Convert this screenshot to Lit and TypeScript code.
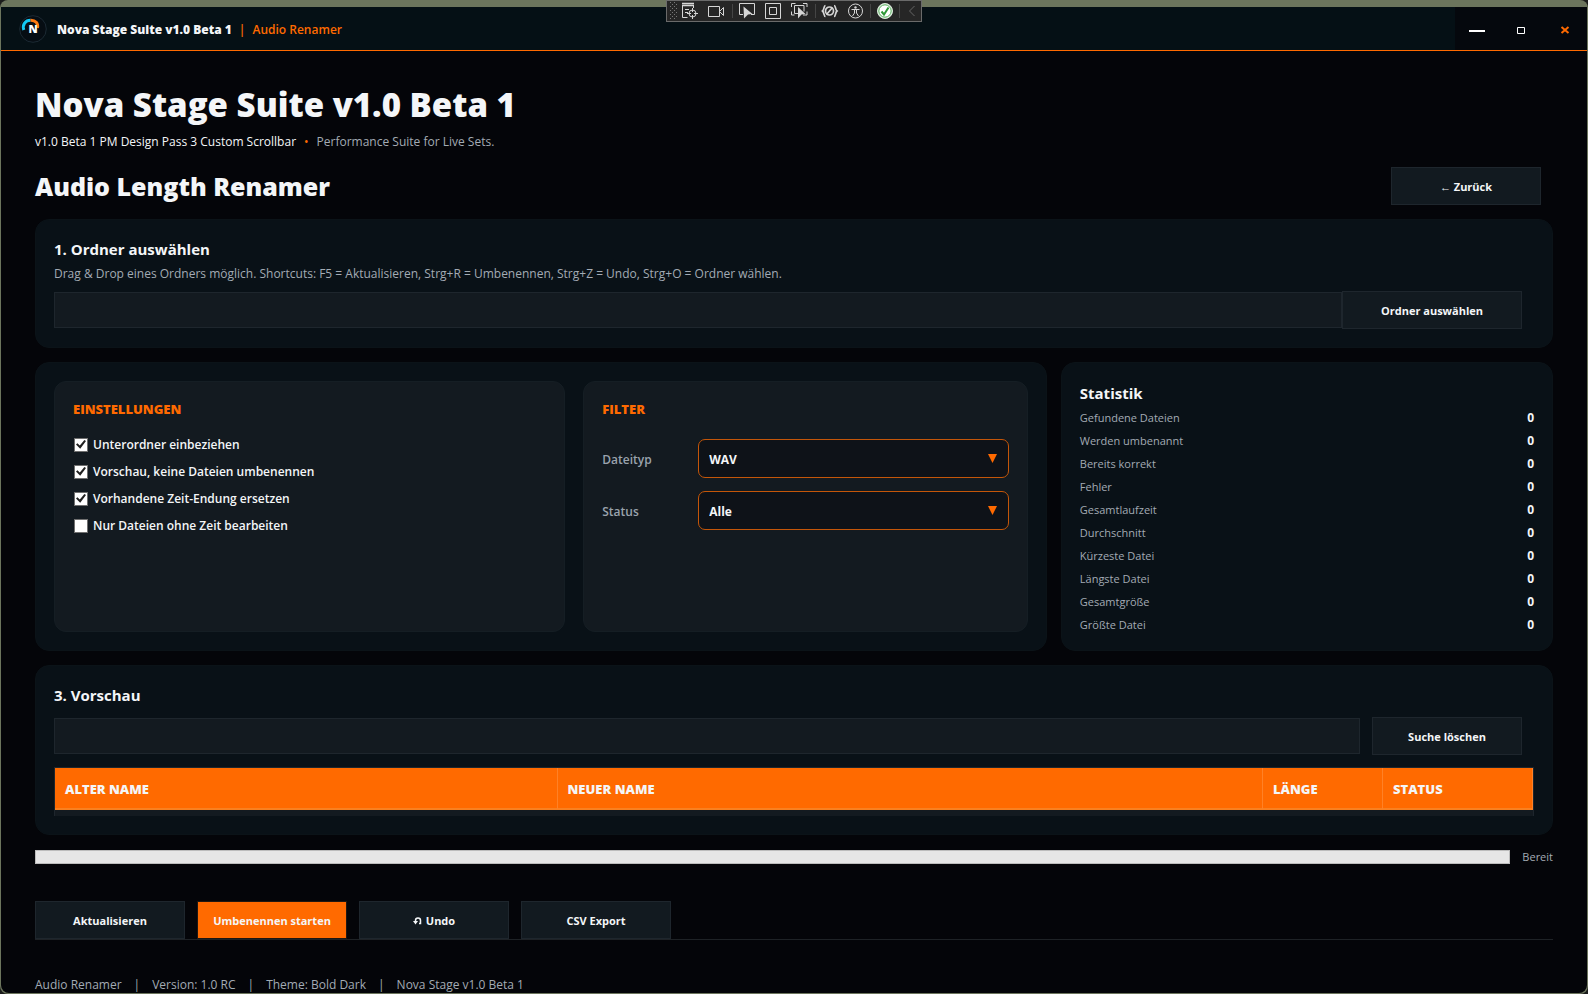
import { LitElement, html, css, svg } from "lit";
import { customElement, property, state } from "lit/decorators.js";

interface Stat {
  label: string;
  value: string;
}

const STATS: Stat[] = [
  "Gefundene Dateien",
  "Werden umbenannt",
  "Bereits korrekt",
  "Fehler",
  "Gesamtlaufzeit",
  "Durchschnitt",
  "Kürzeste Datei",
  "Längste Datei",
  "Gesamtgröße",
  "Größte Datei",
].map((label) => ({ label, value: "0" }));

const OPTIONS = [
  { id: "sub", label: "Unterordner einbeziehen", on: true },
  { id: "preview", label: "Vorschau, keine Dateien umbenennen", on: true },
  { id: "replace", label: "Vorhandene Zeit-Endung ersetzen", on: true },
  { id: "missing", label: "Nur Dateien ohne Zeit bearbeiten", on: false },
];

const FILTERS = [
  { id: "type", label: "Dateityp", values: ["WAV", "MP3", "FLAC"] },
  { id: "status", label: "Status", values: ["Alle", "OK", "Fehler"] },
];

/* Floating debug toolbar docked to the top edge of the window. */
@customElement("debug-toolbar")
export class DebugToolbar extends LitElement {
  static styles = css`
    :host {
      display: block;
    }
    .bar {
      box-sizing: border-box;
      display: flex;
      align-items: center;
      height: 22px;
      width: 256px;
      border: 1px solid #6a6a6a;
      background: #262626;
    }
    .art {
      display: block;
    }
  `;

  render() {
    const dots = [];
    for (let y = 1; y < 20; y += 4) {
      for (let x = 3; x < 9; x += 4) {
        dots.push(svg`<rect x=${x} y=${y} width="1" height="1"/>`);
        if (y < 17) dots.push(svg`<rect x=${x + 2} y=${y + 2} width="1" height="1"/>`);
      }
    }
    return html`
      <div class="bar" role="toolbar" aria-label="Debug">
        <svg class="art" width="254" height="20" viewBox="0 0 254 20" fill="none" stroke="#d6d6d6">
          <g fill="#777" stroke="none">${dots}</g>
          <g>
            <path d="M15 2.500h12M15 4.500h12" stroke-width="1.500" />
            <path d="M15.500 5v11.500h5M18 8.500h4M18 11.500h3M26.500 5v2" />
            <circle cx="25.500" cy="12.500" r="3.500" />
            <path d="M25.500 7v4M25.500 14v4M20 12.500h4M27 12.500h4" />
          </g>
          <path d="M41.500 5.500h11v10h-11zM53 10l3.500-3.500v8L53 11" />
          <path d="M65.500 3v14M148.500 3v14M203.500 3v14M232.500 3v14" stroke="#454545" />
          <path d="M76 13.500h-3.500v-11h15v11H84" />
          <path d="M76.500 5.500l9 7.500-4.500.500-4 4z" fill="#d6d6d6" stroke="none" />
          <path d="M98.500 2.500h15v15h-15zM102.500 6.500h7v7h-7z" />
          <path d="M124.500 6v-3.500h4M136 2.500h4V6M124.500 10.500v3.500h3M140 10.500V14h-4" />
          <path d="M131 12.500h-3.500V4.500h9.500v6" />
          <path d="M131 6l7.500 7-4 .500-3.500 4z" fill="#d6d6d6" stroke="none" />
          <g stroke-width="1.700">
            <path d="M158.500 4.500c-2 0-1 4-3 5.500 2 1.500 1 5.500 3 5.500M167 4.500c2 0 1 4 3 5.500-2 1.500-1 5.500-3 5.500" />
            <circle cx="162.500" cy="10" r="4" />
            <path d="M159.500 13.500l6-7" />
          </g>
          <circle cx="188.500" cy="10" r="7" />
          <circle cx="188.500" cy="6.500" r="1.200" fill="#d6d6d6" stroke="none" />
          <path d="M184.500 8.500h8M187.500 9v3l-2 3M189.500 9v3l2 3" />
          <circle cx="218" cy="10" r="7.500" fill="#fff" stroke="#d9e8d9" />
          <circle cx="218" cy="10" r="6.200" stroke="#4aa850" />
          <path d="M214.500 10.500l2.500 3 4.500-7" stroke="#2f9a38" stroke-width="2" />
          <path d="M247.500 5l-5 5 5 5" stroke="#666" />
        </svg>
      </div>
    `;
  }
}

@customElement("app-root")
export class AppRoot extends LitElement {
  @property() appName = "Nova Stage Suite v1.0 Beta 1";
  @state() private folder = "";
  @state() private query = "";

  static styles = css`
    :host {
      display: block;
      background: #1b1c1b;
      color: #f4f6f8;
      font-family: "Segoe UI", "Open Sans", "Noto Sans", sans-serif;
      font-size: 12px;
    }
    * {
      box-sizing: border-box;
    }
    h1,
    h2,
    h3,
    p {
      margin: 0;
    }
    button,
    input,
    select {
      font: inherit;
      color: inherit;
      margin: 0;
      border-radius: 0;
    }
    .frame {
      display: flex;
      flex-direction: column;
      min-height: 100vh;
      padding: 7px 1px 1px;
      border-radius: 8px;
      background: #6c755d;
    }
    .window {
      flex: 1;
      display: flex;
      flex-direction: column;
      overflow: hidden;
      border-radius: 0 0 8px 8px;
      background: #040509;
    }
    .toolbar {
      position: absolute;
      top: 0;
      left: 50%;
      transform: translateX(-50%);
    }

    .titlebar {
      display: flex;
      align-items: stretch;
      height: 44px;
      border-bottom: 1px solid #ff6a00;
      background: #051015;
    }
    .brand {
      flex: 1;
      display: flex;
      align-items: center;
      gap: 10px;
      padding-left: 18px;
      line-height: 20px;
    }
    .brand b {
      font-weight: 800;
    }
    .crumb {
      display: flex;
      gap: 7px;
      padding-top: 2px;
    }
    .accent {
      color: #ff6a00;
    }
    .crumb .accent {
      font-weight: 600;
    }
    .controls {
      display: flex;
      background: #05080d;
    }
    .control {
      display: grid;
      place-items: center;
      width: 44px;
      padding: 0;
      border: 0;
      background: none;
    }
    .monogram {
      font-size: 11px;
      font-weight: 800;
    }

    .content {
      flex: 1;
      padding: 31px 34px 0;
    }
    .hero {
      font-size: 33px;
      line-height: 46px;
      font-weight: 800;
    }
    .tagline {
      display: flex;
      gap: 8px;
      margin-top: 5px;
      line-height: 18px;
    }
    .muted {
      color: #a3abb4;
    }
    .heading {
      display: flex;
      align-items: center;
      justify-content: space-between;
      margin: 16px 0 14px;
      padding-right: 12px;
    }
    .heading h2 {
      font-size: 25px;
      line-height: 34px;
      font-weight: 800;
    }
    .button {
      width: 150px;
      height: 38px;
      padding: 0;
      border: 1px solid #1e262d;
      background: #121a20;
      font-size: 11px;
      font-weight: 700;
    }
    .button.wide {
      width: 180px;
    }
    .button.primary {
      background: #ff6a00;
      border-color: #1e1712;
    }

    .card {
      padding: 18px;
      border: 1px solid #0b1318;
      border-radius: 14px;
      background: #091117;
    }
    .columns + .card,
    .columns {
      margin-top: 14px;
    }
    .title {
      font-size: 15px;
      line-height: 22px;
      font-weight: 700;
    }
    .hint {
      margin-top: 5px;
      line-height: 18px;
    }
    .field-row {
      display: flex;
      align-items: center;
      padding-right: 12px;
    }
    .folder {
      margin-top: 8px;
    }
    .search {
      margin: 11px 0 12px;
      gap: 12px;
    }
    .input {
      flex: 1;
      min-width: 0;
      height: 36px;
      padding: 0 10px;
      border: 1px solid #1e262d;
      background: #131a20;
      outline: none;
    }

    .columns {
      display: grid;
      grid-template-columns: 37fr 18fr;
      gap: 14px;
    }
    .panels {
      display: grid;
      grid-template-columns: 23fr 20fr;
      gap: 18px;
    }
    .panel {
      padding: 17px 18px;
      border: 1px solid #151e24;
      border-radius: 12px;
      background: #131a20;
    }
    .panel h3 {
      color: #ff6a00;
      font-size: 13px;
      line-height: 20px;
      font-weight: 800;
    }
    .checks {
      display: flex;
      flex-direction: column;
      margin-top: 12px;
    }
    .check {
      display: flex;
      align-items: center;
      gap: 5px;
      font-weight: 600;
      line-height: 27px;
    }
    .check input {
      appearance: none;
      display: grid;
      place-items: center;
      width: 14px;
      height: 14px;
      margin-left: 1px;
      border: 1px solid #707070;
      background: #fff;
    }
    .check input:checked::before {
      content: "";
      width: 10px;
      height: 9px;
      background: #212121;
      clip-path: polygon(0 50%, 14% 36%, 38% 62%, 84% 0, 100% 12%, 42% 96%);
    }
    .filters {
      display: grid;
      grid-template-columns: 96px 1fr;
      align-items: center;
      row-gap: 13px;
      margin-top: 20px;
    }
    .filters label {
      padding-top: 2px;
      color: #9aa3ad;
      font-weight: 600;
    }
    .picker {
      display: grid;
      align-items: center;
    }
    .picker > * {
      grid-area: 1 / 1;
    }
    .picker select {
      appearance: none;
      width: 100%;
      height: 39px;
      padding: 1px 32px 0 10px;
      border: 1px solid #c45609;
      border-radius: 7px;
      background: #0e1218;
      font-weight: 700;
      outline: none;
    }
    .arrow {
      justify-self: end;
      margin-right: 12px;
      pointer-events: none;
    }

    .stats {
      padding: 19px 18px 14px;
    }
    .stat-list {
      margin: 2px 0 0;
    }
    .stat {
      display: flex;
      justify-content: space-between;
      line-height: 23px;
    }
    .stat dt {
      color: #a3abb4;
      font-size: 11px;
    }
    .stat dd {
      margin: 0;
      font-weight: 700;
    }

    .grid {
      padding-bottom: 6px;
      border: 1px solid #1e262d;
      border-bottom: 0;
      background: #131a20;
    }
    table {
      width: 100%;
      border-collapse: separate;
      border-spacing: 0;
      table-layout: fixed;
    }
    th {
      height: 42px;
      padding: 2px 10px 0;
      border-right: 1px solid #ff8126;
      border-bottom: 2px solid #f98020;
      background: #ff6a00;
      font-size: 13px;
      font-weight: 800;
      text-align: left;
    }
    .col-old {
      width: 34%;
    }
    .col-length {
      width: 120px;
    }
    .col-status {
      width: 150px;
    }

    .progress-row {
      display: flex;
      align-items: center;
      gap: 12px;
      margin-top: 13px;
      font-size: 11px;
      line-height: 18px;
    }
    progress {
      appearance: none;
      flex: 1;
      height: 14px;
      border: 1px solid #bcbcbc;
      background: #e6e6e6;
    }
    progress::-webkit-progress-bar {
      background: #e6e6e6;
    }
    .actions {
      display: flex;
      gap: 12px;
      margin-top: 35px;
      border-bottom: 1px solid #1e2226;
    }
    .undo {
      display: inline-flex;
      align-items: center;
      justify-content: center;
      gap: 4px;
    }
    .footer {
      display: flex;
      gap: 12px;
      margin-top: 37px;
      line-height: 16px;
    }
  `;

  private renderTitlebar() {
    return html`
      <header class="titlebar">
        <div class="brand">
          <svg width="28" height="28" viewBox="0 0 28 28" fill="none" aria-hidden="true">
            <circle cx="14" cy="14" r="13.300" fill="#060d13" stroke="#1c2a34" />
            <path d="M4.800 15C3 9.500 6.500 5.200 11.500 5.200" stroke="#12c8f4" stroke-width="3" />
            <path d="M11.500 5.200C16.500 5 19.500 8.500 18.500 13" stroke="#ff7a10" stroke-width="3" />
            <text class="monogram" x="9.500" y="18.300" fill="#fff">N</text>
          </svg>
          <div class="crumb">
            <b>${this.appName}</b>
            <span class="accent">|</span>
            <span class="accent">Audio Renamer</span>
          </div>
        </div>
        <div class="controls">
          <button class="control" aria-label="Minimieren">
            <svg width="16" height="16" stroke="#fff" stroke-width="2"><path d="M0 10h16" /></svg>
          </button>
          <button class="control" aria-label="Maximieren">
            <svg width="10" height="14" fill="none" stroke="#fff"><path d="M1.500 5.500h7v6h-7z" /></svg>
          </button>
          <button class="control" aria-label="Schließen">
            <svg width="10" height="12" stroke="#ff6a00" stroke-width="2">
              <path d="M1.500 4l7 6M8.500 4l-7 6" />
            </svg>
          </button>
        </div>
      </header>
    `;
  }

  private renderFilters() {
    return FILTERS.map(
      (f) => html`
        <label for=${f.id}>${f.label}</label>
        <div class="picker">
          <select id=${f.id}>
            ${f.values.map((v) => html`<option>${v}</option>`)}
          </select>
          <svg class="arrow" width="9" height="9" fill="#ff6a00" aria-hidden="true">
            <path d="M0 0h9l-4.500 9z" />
          </svg>
        </div>
      `
    );
  }

  render() {
    return html`
      <div class="frame">
        <debug-toolbar class="toolbar"></debug-toolbar>
        <div class="window">
          ${this.renderTitlebar()}
          <main class="content">
            <h1 class="hero">${this.appName}</h1>
            <p class="tagline">
              <span>v1.0 Beta 1 PM Design Pass 3 Custom Scrollbar</span>
              <span class="accent">•</span>
              <span class="muted">Performance Suite for Live Sets.</span>
            </p>
            <div class="heading">
              <h2>Audio Length Renamer</h2>
              <button class="button">← Zurück</button>
            </div>

            <section class="card">
              <h3 class="title">1. Ordner auswählen</h3>
              <p class="hint muted">
                Drag &amp; Drop eines Ordners möglich. Shortcuts: F5 = Aktualisieren, Strg+R = Umbenennen, Strg+Z =
                Undo, Strg+O = Ordner wählen.
              </p>
              <div class="field-row folder">
                <input class="input" type="text" aria-label="Ordner" .value=${this.folder} />
                <button class="button wide">Ordner auswählen</button>
              </div>
            </section>

            <div class="columns">
              <section class="card panels">
                <div class="panel">
                  <h3>EINSTELLUNGEN</h3>
                  <div class="checks">
                    ${OPTIONS.map(
                      (o) => html`
                        <label class="check" for=${o.id}>
                          <input id=${o.id} type="checkbox" ?checked=${o.on} />${o.label}
                        </label>
                      `
                    )}
                  </div>
                </div>
                <div class="panel">
                  <h3>FILTER</h3>
                  <div class="filters">${this.renderFilters()}</div>
                </div>
              </section>
              <section class="card stats">
                <h3 class="title">Statistik</h3>
                <dl class="stat-list">
                  ${STATS.map(
                    (s) => html`<div class="stat"><dt>${s.label}</dt><dd>${s.value}</dd></div>`
                  )}
                </dl>
              </section>
            </div>

            <section class="card">
              <h3 class="title">3. Vorschau</h3>
              <div class="field-row search">
                <input class="input" type="text" aria-label="Suche" .value=${this.query} />
                <button class="button">Suche löschen</button>
              </div>
              <div class="grid">
                <table>
                  <colgroup>
                    <col class="col-old" />
                    <col />
                    <col class="col-length" />
                    <col class="col-status" />
                  </colgroup>
                  <thead>
                    <tr>
                      <th>ALTER NAME</th>
                      <th>NEUER NAME</th>
                      <th>LÄNGE</th>
                      <th>STATUS</th>
                    </tr>
                  </thead>
                </table>
              </div>
            </section>

            <div class="progress-row">
              <progress max="100" value="0" aria-label="Fortschritt"></progress>
              <span class="muted">Bereit</span>
            </div>

            <div class="actions">
              <button class="button">Aktualisieren</button>
              <button class="button primary">Umbenennen starten</button>
              <button class="button undo">
                <svg width="9" height="9" fill="none" stroke="#f4f6f8" stroke-width="1.500" aria-hidden="true">
                  <path d="M2.500 6V4.500a2.500 2.500 0 0 1 5 0V7.500H6" />
                  <path d="M0 5h5L2.500 8.500z" fill="#f4f6f8" stroke="none" />
                </svg>
                Undo
              </button>
              <button class="button">CSV Export</button>
            </div>

            <footer class="footer muted">
              <span>Audio Renamer</span><span>|</span><span>Version: 1.0 RC</span><span>|</span>
              <span>Theme: Bold Dark</span><span>|</span><span>Nova Stage v1.0 Beta 1</span>
            </footer>
          </main>
        </div>
      </div>
    `;
  }
}
